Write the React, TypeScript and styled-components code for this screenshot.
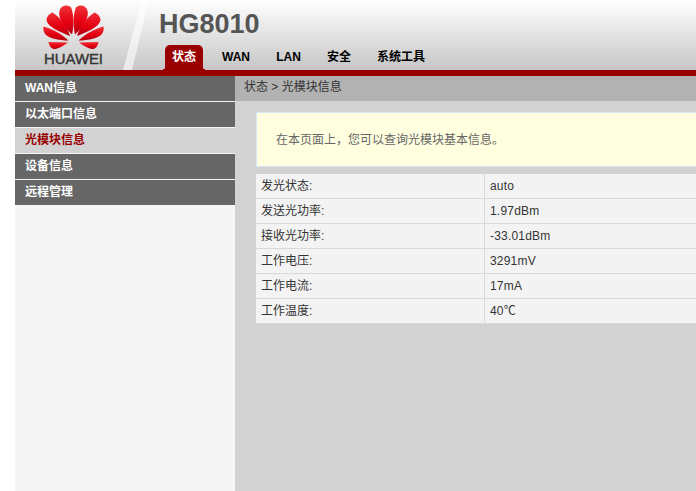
import React from "react";
import styled, { createGlobalStyle } from "styled-components";

const Global = createGlobalStyle`
  html, body { margin: 0; padding: 0; background: #fff; overflow: hidden; }
  body { font-family: "Liberation Sans", "Noto Sans CJK SC", sans-serif; }
`;

const Page = styled.div`
  width: 696px; height: 491px; padding-left: 15px; box-sizing: border-box;
  display: flex; flex-direction: column; overflow: hidden;
`;
const Header = styled.header`
  position: relative; height: 70px; flex: none; display: flex;
  background: linear-gradient(#fff 0%, #c6c6c6 100%);
`;
const Streak = styled.svg`
  position: absolute; left: 105px; top: 0; width: 40px; height: 70px;
`;
const LogoBox = styled.div`
  width: 144px; flex: none; padding-left: 25px; box-sizing: border-box;
`;
const Logo = styled.svg` display: block; width: 67px; height: 66px; margin-top: 2px; `;
const Brand = styled.div`
  display: flex; flex-direction: column;
`;
const Model = styled.div`
  font: bold 27px/30px "Liberation Sans", sans-serif; color: #555; padding-top: 9px; height: 36px;
`;
const Tabs = styled.nav`
  display: flex; margin-left: 6px;
`;
const Tab = styled.div<{ $on?: boolean; $w: number }>`
  position: relative;
  width: ${(p) => p.$w}px; height: 25px; box-sizing: border-box; text-align: center;
  font-size: 12px; font-weight: bold; line-height: 25px;
  color: ${(p) => (p.$on ? "#fff" : "#000")};
  background: ${(p) => (p.$on ? "#990000" : "transparent")};
  border-radius: 5px 5px 0 0;
  ${(p) =>
    p.$on
      ? `
    &::before, &::after {
      content: ""; position: absolute; bottom: 0; width: 2px; height: 3px;
    }
    &::before { left: -2px; background: radial-gradient(circle at 0 0, transparent 2px, #990000 2.5px); }
    &::after { right: -2px; background: radial-gradient(circle at 100% 0, transparent 2px, #990000 2.5px); }
  `
      : ""}
`;
const RedBar = styled.div` height: 6px; flex: none; background: #990000; `;
const Body = styled.div` flex: 1; display: flex; min-height: 0; `;
const Side = styled.aside` width: 220px; flex: none; background: #f5f5f5; `;
const SideItem = styled.div<{ $on?: boolean }>`
  height: 25px; margin-bottom: 1px; padding-left: 10px;
  font-size: 12px; font-weight: bold; line-height: 24px;
  color: ${(p) => (p.$on ? "#990000" : "#fff")};
  background: ${(p) => (p.$on ? "#d2d2d2" : "#666")};
`;
const Main = styled.main` flex: 1; background: #d2d2d2; min-width: 0; `;
const Crumb = styled.div`
  height: 25px; background: #b2b2b2; padding-left: 10px; font-size: 12px; line-height: 23px; color: #333;
`;
const CrumbText = styled.span` margin-left: -1px; `;
const Content = styled.div` padding: 11px 0 0 21px; `;
const Note = styled.div`
  height: 55px; box-sizing: border-box; background: #ffffe0; padding: 20px 0 0 19px;
  border: 1px solid #d6e8f4; border-right: none;
  font-size: 12px; line-height: 15px; color: #666; margin-bottom: 7px;
`;
const Table = styled.div` background: #f3f3f3; `;
const Row = styled.div`
  display: flex; height: 25px; box-sizing: border-box; border-bottom: 1px solid #d9d9d9;
  font-size: 12px; line-height: 24px; color: #333;
`;
const Label = styled.div` width: 229px; flex: none; box-sizing: border-box; padding-left: 5px; border-right: 1px solid #d9d9d9; `;
const Value = styled.div` padding-left: 5px; letter-spacing: 0.2px; `;

const rows = [
  ["发光状态:", "auto"],
  ["发送光功率:", "1.97dBm"],
  ["接收光功率:", "-33.01dBm"],
  ["工作电压:", "3291mV"],
  ["工作电流:", "17mA"],
  ["工作温度:", "40℃"],
];
const petals = [
  "M32 32.5 C24 25 16 14 20.5 6.5 C23 3 27.5 2.5 31 5.5 C34 12 34 24 32 32.5Z",
  "M30 34 C20 30 7.5 25 6.5 18 C6.5 15 9.5 11.5 12.5 10.5 C20 15 27 24 30 34Z",
  "M28.5 38.5 C19 38.5 7.5 36.5 4.5 31 C3.5 29 3 27 3.5 24.5 C12 27 22 32 28.5 38.5Z",
  "M8.5 40 L28 40.5 C22 44.5 18 47 14 47 C11 46.5 9 43.5 8.5 40Z",
];

export default function App() {
  return (
    <Page>
      <Global />
      <Header>
        <Streak viewBox="0 0 40 70">
          <polygon points="22,0 29,0 12,70 3,70" fill="#fff" opacity="0.6" />
        </Streak>
        <LogoBox>
          <Logo viewBox="0 0 67 66">
            <defs>
              <linearGradient id="pet" x1="0" y1="0" x2="0" y2="1">
                <stop offset="0" stopColor="#ee3438" />
                <stop offset="0.55" stopColor="#e60012" />
                <stop offset="1" stopColor="#b3000f" />
              </linearGradient>
            </defs>
            {petals.map((d) => (
              <path key={d} d={d} fill="url(#pet)" />
            ))}
            {petals.map((d) => (
              <path key={d} d={d} fill="url(#pet)" transform="translate(67 0) scale(-1 1)" />
            ))}
            <text x="33.5" y="61.5" textAnchor="middle" fontFamily="Liberation Sans" fontSize="14" fill="#333" stroke="#333" strokeWidth="0.35" textLength="59" lengthAdjust="spacingAndGlyphs">HUAWEI</text>
          </Logo>
        </LogoBox>
        <Brand>
          <Model>HG8010</Model>
          <Tabs>
            <Tab $on $w={38}>状态</Tab>
            <Tab $w={66}>WAN</Tab>
            <Tab $w={39}>LAN</Tab>
            <Tab $w={62}>安全</Tab>
            <Tab $w={62}>系统工具</Tab>
          </Tabs>
        </Brand>
      </Header>
      <RedBar />
      <Body>
        <Side>
          <SideItem>WAN信息</SideItem>
          <SideItem>以太端口信息</SideItem>
          <SideItem $on>光模块信息</SideItem>
          <SideItem>设备信息</SideItem>
          <SideItem>远程管理</SideItem>
        </Side>
        <Main>
          <Crumb><CrumbText>状态 &gt; 光模块信息</CrumbText></Crumb>
          <Content>
            <Note>在本页面上，您可以查询光模块基本信息。</Note>
            <Table>
              {rows.map(([l, v]) => (
                <Row key={l}><Label>{l}</Label><Value>{v}</Value></Row>
              ))}
            </Table>
          </Content>
        </Main>
      </Body>
    </Page>
  );
}
